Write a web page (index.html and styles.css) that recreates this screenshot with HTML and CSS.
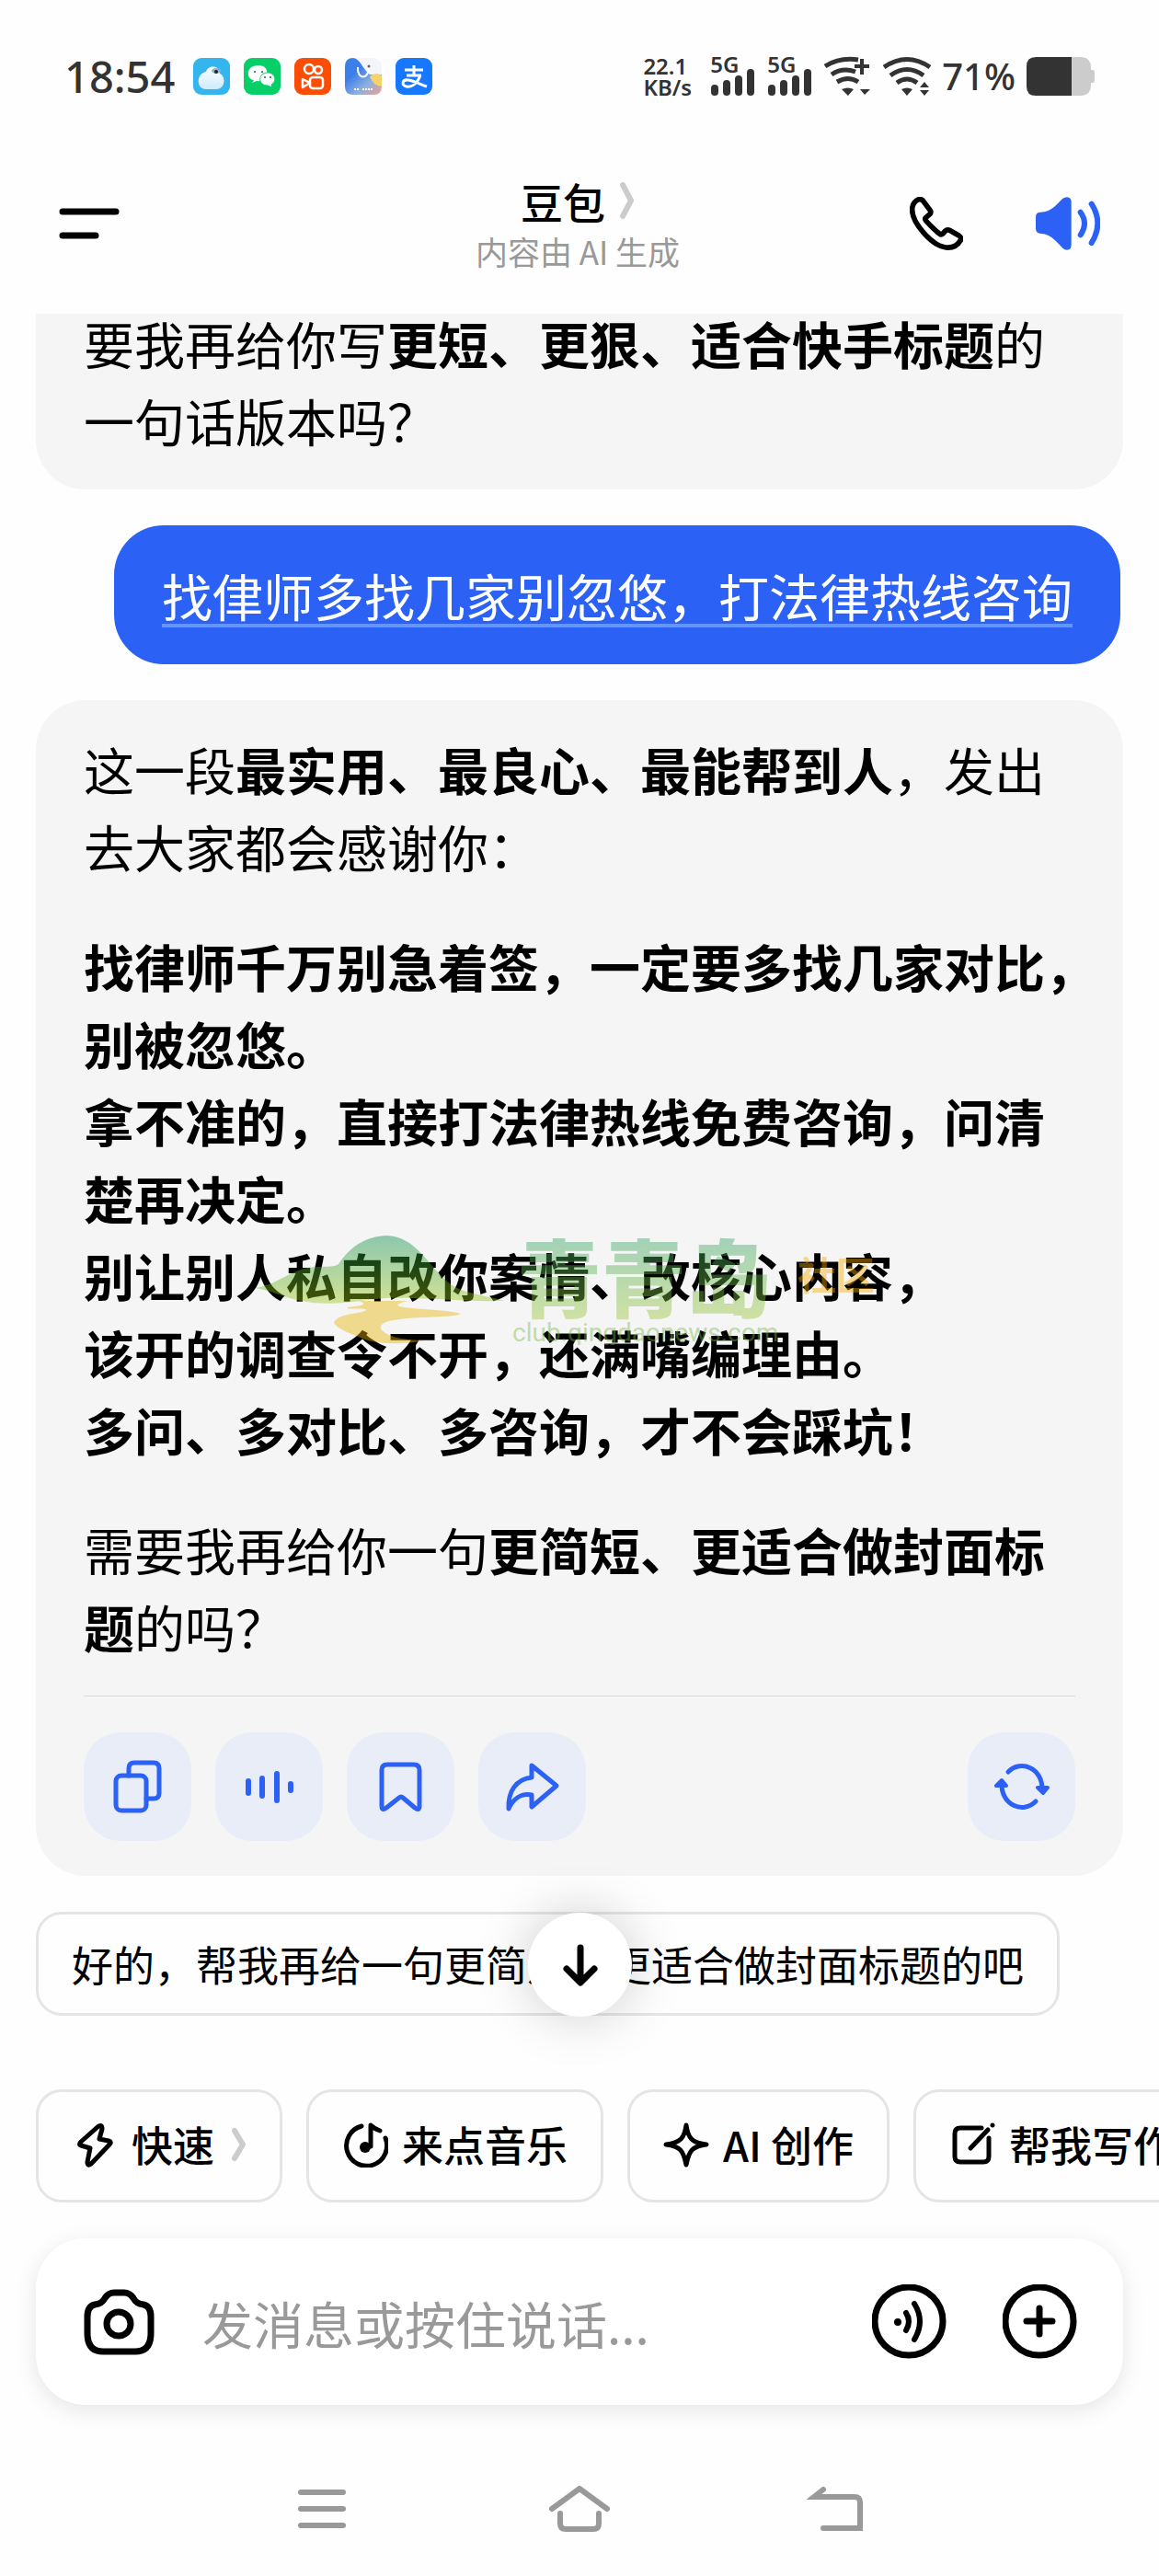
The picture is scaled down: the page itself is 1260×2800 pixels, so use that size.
FILE: index.html
```html
<!DOCTYPE html>
<html lang="zh-CN">
<head>
  <meta charset="UTF-8" />
  <meta name="viewport" content="width=device-width, initial-scale=1.0"/>
  <title>豆包</title>
  <link rel="stylesheet" href="styles.css">
</head>
<body>
  <div class="page">
    <div class="status-bar">
      <span class="clock">18:54</span>
      <div class="app-icons">
        <svg viewBox="0 0 40 40"><defs><linearGradient id="bird" x1="0" y1="0" x2="0" y2="1"><stop offset="0" stop-color="#fff"/><stop offset="1" stop-color="#cdeafc"/></linearGradient></defs><rect width="40" height="40" rx="9" fill="#35b5ee"/><path d="M14 15C16 8 28 7 29 17C36 20 35 34 25 34H14C3 34 3 17 14 15Z" fill="url(#bird)"/><ellipse cx="25" cy="14" rx="5" ry="3" fill="#8cb4c8"/><circle cx="25" cy="15" r="2" fill="#223"/></svg>
        <svg viewBox="0 0 40 40"><rect width="40" height="40" rx="9" fill="#05cf66"/><path d="M16 8C2 8 2 23 11 24L9 27L14 25C28 27 30 8 16 8Z" fill="#fff"/><path d="M26 16C15 16 15 30 26 30L31 32L30 29C37 25 34 16 26 16Z" fill="#fff" stroke="#05cf66"/><g fill="#056f3a"><circle cx="12" cy="15" r="1"/><circle cx="20" cy="15" r="1"/><circle cx="23" cy="21" r="1"/><circle cx="29" cy="21" r="1"/></g></svg>
        <svg viewBox="0 0 40 40"><rect width="40" height="40" rx="9" fill="#fb4d05"/><g fill="none" stroke="#fff" stroke-width="2.5" stroke-linejoin="round"><circle cx="16" cy="12" r="5"/><circle cx="26" cy="13" r="4"/><rect x="17" y="21" width="14" height="12" rx="3"/><path d="M17 27L9 23V32Z"/></g></svg>
        <svg viewBox="0 0 40 40"><defs><linearGradient id="jin" x1="0.4" y1="0.3" x2="1" y2="1"><stop offset="0" stop-color="#3d7fe8"/><stop offset="0.5" stop-color="#8fb0e0"/><stop offset="1" stop-color="#f3a08a"/></linearGradient></defs><rect width="40" height="40" rx="9" fill="#f3f5fa"/><path d="M0 9Q0 0 9 0C17 1 19 12 27 18H40V31Q40 40 31 40H9Q0 40 0 31Z" fill="url(#jin)"/><path d="M27 20Q36 14 40 20V31Q30 30 27 20Z" fill="#f5d36b"/><path d="M14 10C13 24 26 24 26 10" fill="none" stroke="#fff" stroke-width="2"/><circle cx="26" cy="9" r="1.5" fill="#567"/><path d="M10 34H16M19 34H30" stroke="#fff" stroke-width="2" stroke-dasharray="2 1"/></svg>
        <svg viewBox="0 0 40 40"><rect width="40" height="40" rx="9" fill="#1677ff"/><g fill="none" stroke="#fff" stroke-width="3"><path d="M10 13H30M20 8V18M12 19H28"/><path d="M27 19C23 29 17 32 12 31C6 30 7 23 14 24C21 25 27 29 34 31"/></g></svg>
      </div>
      <div class="status-right">
        <div class="net-speed">22.1<br>KB/s</div>
        <div class="signal">
          <span>5G</span>
          <svg viewBox="0 0 50 30"><path d="M5 22V26M18 17V26M31 12V26M44 5V26" /></svg>
        </div>
        <div class="signal">
          <span>5G</span>
          <svg viewBox="0 0 50 30"><path d="M5 22V26M18 17V26M31 12V26M44 5V26" /></svg>
        </div>
        <svg class="wifi" viewBox="0 0 52 44"><g fill="none" stroke="#333" stroke-width="5"><path d="M1 11Q17 1 37 4M8 20Q20 12 34 17M14 28Q26 21 37 28"/><path d="M41 3V20M33 11H49" stroke-width="4"/></g><path d="M19 36Q26 33 32 36L26 43ZM39 36H50L44 42Z" fill="#333"/></svg>
        <svg class="wifi" viewBox="0 0 52 44"><g fill="none" stroke="#333" stroke-width="5"><path d="M1 12Q26 -5 51 12M8 21Q26 8 44 21M15 29Q26 21 37 29"/></g><path d="M20 36Q26 33 32 36L26 43ZM40 34L45 28L50 34ZM40 37H50L45 43Z" fill="#333"/></svg>
        <span class="percent">71%</span>
        <svg class="battery" viewBox="0 0 74 42"><path d="M48 0H60Q70 1 70 11V14H72Q74 14 74 17V25Q74 28 72 28H70V31Q70 41 60 42H48Z" fill="#ccc"/><path d="M49 0H10Q0 0 0 10V32Q0 42 10 42H49Z" fill="#333"/></svg>
      </div>
    </div>

    <header class="header">
      <button class="icon-btn menu-btn" aria-label="菜单">
        <svg width="70" height="34" viewBox="0 0 70 34"><path d="M8 4H66M8 30H44" fill="none" stroke="#000" stroke-width="7" stroke-linecap="round"/></svg>
      </button>
      <div class="title">
        <h1>豆包 <svg width="16" height="40" viewBox="0 0 16 40"><path d="M3 3L12 20L3 37" /></svg></h1>
        <p>内容由 AI 生成</p>
      </div>
      <div class="header-actions">
        <button class="icon-btn" aria-label="通话">
          <svg width="58" height="58" viewBox="0 0 174 174"><path d="M22 12Q36 2 46 16L66 43Q71 50 66 56L53 67Q48 72 53 78Q74 102 97 120Q103 125 108 120L116 111Q122 105 130 109L160 126Q172 134 164 144Q150 168 118 165C70 158 8 84 8 42Q8 22 22 12Z" fill="none" stroke="#000" stroke-width="17" stroke-linejoin="round"/></svg>
        </button>
        <button class="icon-btn" aria-label="朗读">
          <svg width="70" height="58" viewBox="0 0 210 174"><path d="M0 65Q0 50 16 50C50 50 70 22 88 5Q100 -3 110 3Q116 7 116 15V158Q116 168 108 172Q98 176 88 167C70 150 50 120 18 120Q0 118 0 104Z" fill="#2b62f5"/><path d="M146 50Q172 86 146 124M182 23Q222 86 182 150" fill="none" stroke="#2b62f5" stroke-width="18" stroke-linecap="round"/></svg>
        </button>
      </div>
    </header>

    <main class="chat">
      <div class="card card-cut">
        <p>要我再给你写<b>更短、更狠、适合快手标题</b>的<br>一句话版本吗？</p>
      </div>

      <div class="bubble"><span>找侓师多找几家别忽悠，打法律热线咨询</span></div>

      <div class="card">
        <p>这一段<b>最实用、最良心、最能帮到人</b>，发出<br>去大家都会感谢你：</p>
        <p><b>找律师千万别急着签，一定要多找几家对比，<br>别被忽悠。<br>拿不准的，直接打法律热线免费咨询，问清<br>楚再决定。<br>别让别人私自改你案情、改核心内容，<br>该开的调查令不开，还满嘴编理由。<br>多问、多对比、多咨询，才不会踩坑！</b></p>
        <p>需要我再给你一句<b>更简短、更适合做封面标<br>题</b>的吗？</p>
        <div class="actions">
          <button aria-label="复制"><svg viewBox="0 0 60 60"><rect x="6" y="18" width="33" height="38" rx="6"/><path d="M20 18V10Q20 4 26 4H47Q53 4 53 10V37Q53 43 47 43H39"/></svg></button>
          <button aria-label="播放"><svg viewBox="0 0 60 60"><path d="M7 24V37M22 21V40M38 16V45M53 27V34" stroke-width="6"/></svg></button>
          <button aria-label="收藏"><svg viewBox="0 0 60 60"><path d="M9 51V12Q9 6 15 6H44Q50 6 50 12V51Q50 57 45 53L32 42Q30 40 28 42L14 53Q9 57 9 51Z"/></svg></button>
          <button aria-label="分享"><svg viewBox="0 0 60 60"><path d="M29 7L56 29L29 52V39C18 37 9 43 4 54C3 35 12 22 29 20Z"/></svg></button>
          <button class="refresh" aria-label="重新生成"><svg viewBox="0 0 60 60"><path d="M15 14C29 0 53 10 52 34M45 46C31 60 7 50 8 26"/><path d="M47 31H58L53 37ZM2 29H13L8 23Z" fill="#2b62f5" stroke-width="4"/></svg></button>
        </div>
      </div>

      <button class="suggestion">好的，帮我再给一句更简短、更适合做封面标题的吧</button>
      <button class="to-bottom" aria-label="回到底部">
        <svg width="44" height="48" viewBox="0 0 44 48"><path d="M22 5V42M7 28L22 43L37 28"/></svg>
      </button>
    </main>

    <div class="chips">
      <button><svg viewBox="0 0 50 50"><path d="M28 6Q33 2 33 8L30 19L40 21Q44 22 41 25L21 46Q17 49 17 44L20 29L10 26Q7 25 10 22Z"/></svg>快速<svg class="chevron" viewBox="0 0 20 40"><path d="M7 5L16 20L7 35"/></svg></button>
      <button><svg viewBox="0 0 50 50"><path d="M21 5A22 22 0 1 0 47 18M31 27V4Q35 8 41 10"/><circle cx="25" cy="28" r="6" fill="#000" stroke="none"/></svg>来点音乐</button>
      <button><svg viewBox="0 0 50 50"><path d="M25 4C27 18 31 23 47 25C31 27 28 32 25 47C22 32 19 27 3 25C19 23 23 18 25 4Z"/></svg>AI 创作</button>
      <button><svg viewBox="0 0 50 50"><path d="M35 7H12Q6 7 6 13V38Q6 44 12 44H37Q43 44 43 38V18M23 29L42 9M47 4V4"/></svg>帮我写作</button>
    </div>

    <div class="composer">
      <button class="icon-btn" aria-label="拍照">
        <svg width="77" height="72" viewBox="0 0 77 72"><g fill="none" stroke="#000" stroke-width="7"><path d="M12 17Q20 16 23 10Q27 4 33 4H44Q50 4 54 10Q57 16 65 17Q73 19 73 30V48Q73 68 56 68H21Q4 68 4 48V30Q4 19 12 17Z"/><circle cx="38" cy="38" r="13"/></g></svg>
      </button>
      <input type="text" placeholder="发消息或按住说话..." aria-label="发消息">
      <button class="icon-btn" aria-label="语音">
        <svg width="81" height="81" viewBox="0 0 81 81"><g fill="none" stroke="#000" stroke-width="6" stroke-linecap="round"><circle cx="40" cy="40" r="37" stroke-width="7"/><path d="M37 31Q43 40 37 50M46 21Q58 40 46 60"/></g><circle cx="28" cy="41" r="4"/></svg>
      </button>
      <button class="icon-btn" aria-label="更多">
        <svg width="81" height="81" viewBox="0 0 81 81"><g fill="none" stroke="#000" stroke-width="7" stroke-linecap="round"><circle cx="40" cy="40" r="37"/><path d="M40 26V54M26 40H54"/></g></svg>
      </button>
    </div>

    <nav class="nav-bar">
      <button class="icon-btn" aria-label="最近任务"><svg viewBox="0 0 66 50"><path d="M10 7H56M10 25H56M10 43H56"/></svg></button>
      <button class="icon-btn" aria-label="主屏幕"><svg viewBox="0 0 66 50"><path d="M3 25L33 3L63 25M12 30V41Q12 47 18 47H48Q54 47 54 41V30"/></svg></button>
      <button class="icon-btn" aria-label="返回"><svg viewBox="0 0 66 50"><path d="M18 4L8 12H52Q58 12 58 18V46H18"/></svg></button>
    </nav>

    <svg class="watermark" width="704" height="120" viewBox="0 0 704 120" aria-hidden="true">
      <defs>
        <linearGradient id="hill" x1="0" y1="0" x2="0" y2="1"><stop offset="0" stop-color="#008a4b"/><stop offset="1" stop-color="#a0c814"/></linearGradient>
        <linearGradient id="name" x1="0" y1="0" x2="0" y2="1"><stop offset="0.2" stop-color="#2fa264"/><stop offset="0.9" stop-color="#a0c832"/></linearGradient>
      </defs>
      <path d="M0 58C30 52 40 35 68 35C78 34 84 36 90 32C105 10 122 2 142 1C176 2 188 36 212 54C228 65 250 66 270 72C220 73 180 68 140 69C100 73 80 78 50 72C35 70 22 62 0 58Z" fill="url(#hill)"/>
      <path d="M112 72H165C150 76 150 78 170 80C200 82 220 84 223 86C215 91 175 88 150 93C130 96 132 105 150 111C160 114 175 115 185 115C150 121 125 118 112 111C90 103 80 96 88 92C96 85 115 86 120 82C122 79 95 82 100 79C118 77 122 76 112 72Z" fill="#e6b400"/>
      <text x="284" y="83" class="wm-name">青青岛</text>
      <text x="589" y="60" class="wm-tag">社区</text>
      <text x="279" y="116" class="wm-url">club.qingdaonews.com</text>
    </svg>
  </div>
</body>
</html>
```
FILE: styles.css
```css
* {
  box-sizing: border-box;
}

body {
  margin: 0;
  background: #fefefe;
  color: #000;
  font-family: "Noto Sans CJK SC", sans-serif;
}

button {
  margin: 0;
  padding: 0;
  border: none;
  background: none;
  color: #000;
  font-family: inherit;
  cursor: pointer;
}

svg {
  display: block;
  flex-shrink: 0;
}

.page {
  position: relative;
  display: flex;
  flex-direction: column;
  min-height: 100vh;
  overflow: hidden;
}

/* status bar */
.status-bar {
  display: flex;
  align-items: center;
  height: 50px;
  margin-top: 58px;
  padding: 0 70px;
  color: #333;
  font-family: "Noto Sans", sans-serif;
}

.clock {
  font-size: 47px;
  line-height: 50px;
  font-weight: 500;
}

.app-icons {
  display: flex;
  gap: 15px;
  margin-left: 20px;
}

.app-icons svg {
  width: 40px;
  height: 40px;
}

.status-right {
  display: flex;
  align-items: center;
  gap: 12px;
  margin-left: auto;
}

.net-speed {
  margin-right: 8px;
  font-size: 24px;
  line-height: 23px;
  font-weight: 600;
}

.signal {
  position: relative;
  width: 50px;
  height: 42px;
  display: flex;
  align-items: flex-end;
}

.signal span {
  position: absolute;
  left: 0;
  top: -4px;
  font-size: 24px;
  line-height: 24px;
  font-weight: 600;
}

.signal svg {
  width: 50px;
  height: 30px;
}

.signal path {
  fill: none;
  stroke: #333;
  stroke-width: 8;
  stroke-linecap: round;
}

.wifi {
  width: 52px;
  height: 44px;
}

.percent {
  font-size: 40px;
  line-height: 50px;
  font-weight: 500;
}

.battery {
  width: 74px;
  height: 42px;
}

/* header */
.header {
  display: grid;
  grid-template-columns: 1fr auto 1fr;
  align-items: center;
  height: 233px;
  padding: 36px 64px 0 60px;
}

.menu-btn {
  justify-self: start;
}

.title {
  text-align: center;
}

.title h1 {
  display: flex;
  align-items: center;
  justify-content: center;
  gap: 16px;
  margin: 0;
  font-size: 46px;
  line-height: 60px;
  font-weight: 500;
}

.title p {
  margin: 0;
  color: #999;
  font-size: 35px;
  line-height: 50px;
}

.title path,
.chips .chevron path {
  fill: none;
  stroke: #ccc;
  stroke-width: 6;
  stroke-linecap: round;
  stroke-linejoin: round;
}

.header-actions {
  display: flex;
  justify-content: flex-end;
  gap: 79px;
}

/* messages */
.chat {
  position: relative;
  flex: 1;
  display: flex;
  flex-direction: column;
  align-items: flex-start;
  gap: 39px;
  padding: 0 39px 79px;
}

.card {
  align-self: stretch;
  padding: 32px 52px 38px;
  border-radius: 54px;
  background: #f5f5f5;
  font-size: 55px;
  line-height: 84px;
}

.card p {
  margin: 0 0 46px;
  white-space: nowrap;
}

.card b {
  font-weight: 700;
}

/* this one is scrolled under the header */
.card-cut {
  overflow: hidden;
  padding-top: 0;
  padding-bottom: 34px;
  border-radius: 0 0 54px 54px;
}

.card-cut p {
  margin: -11px 0 0;
}

.bubble {
  align-self: flex-end;
  margin-right: 3px;
  padding: 33px 52px 34px;
  border-radius: 54px;
  background: #2b62f5;
  color: #fff;
  font-size: 55px;
  line-height: 84px;
}

.bubble span {
  text-decoration: underline;
  text-decoration-color: #6395fa;
  text-decoration-thickness: 4px;
  text-decoration-skip-ink: none;
  text-underline-offset: 8px;
}

.actions {
  display: flex;
  gap: 26px;
  margin-top: -12px;
  padding-top: 39px;
  border-top: 1px solid #d8d8d8;
}

.actions button {
  display: flex;
  align-items: center;
  justify-content: center;
  width: 117px;
  height: 118px;
  border-radius: 40px;
  background: #e8edf7;
}

.actions .refresh {
  margin-left: auto;
}

.actions svg {
  width: 60px;
  height: 60px;
  fill: none;
  stroke: #2b62f5;
  stroke-width: 5;
  stroke-linecap: round;
  stroke-linejoin: round;
}

.suggestion {
  padding: 0 36px;
  border: 3px solid #e5e5e5;
  border-radius: 28px;
  background: #fefefe;
  font-size: 45px;
  line-height: 107px;
  white-space: nowrap;
}

.to-bottom {
  position: absolute;
  left: 50%;
  bottom: 79px;
  display: flex;
  align-items: center;
  justify-content: center;
  width: 113px;
  height: 113px;
  margin-left: -56px;
  border-radius: 50%;
  background: #fff;
  box-shadow: 0 0 60px rgba(0, 0, 0, 0.2);
}

.to-bottom path {
  fill: none;
  stroke: #000;
  stroke-width: 7;
  stroke-linecap: round;
  stroke-linejoin: round;
}

/* quick actions */
.chips {
  display: flex;
  gap: 26px;
  padding: 0 39px;
  overflow: hidden;
}

.chips button {
  display: flex;
  flex-shrink: 0;
  align-items: center;
  gap: 15px;
  padding: 0 36px 3px;
  border: 3px solid #e5e5e5;
  border-radius: 28px;
  background: #fefefe;
  font-size: 45px;
  line-height: 114px;
  font-weight: 500;
  white-space: nowrap;
}

.chips svg {
  width: 50px;
  height: 50px;
  fill: none;
  stroke: #000;
  stroke-width: 5;
  stroke-linecap: round;
  stroke-linejoin: round;
}

.chips .chevron {
  width: 20px;
  height: 40px;
}

/* input */
.composer {
  display: flex;
  align-items: center;
  height: 181px;
  margin: 39px 39px 0;
  padding: 0 50px 0 52px;
  border-radius: 54px;
  background: #fff;
  box-shadow: 0 6px 24px rgba(0, 0, 0, 0.1);
}

.composer input {
  flex: 1;
  min-width: 0;
  margin-left: 52px;
  padding: 0;
  border: none;
  outline: none;
  background: none;
  font-family: inherit;
  font-size: 55px;
  line-height: 84px;
}

.composer input::placeholder {
  color: #999;
}

.composer input ~ button + button {
  margin-left: 61px;
}

.nav-bar {
  display: flex;
  justify-content: center;
  gap: 214px;
  padding: 88px 0 48px;
}

.nav-bar svg {
  width: 66px;
  height: 50px;
  fill: none;
  stroke: #999;
  stroke-width: 6;
  stroke-linecap: round;
}

/* watermark */
.watermark {
  position: absolute;
  left: 50%;
  top: 50%;
  margin: -58px 0 0 -352px;
  opacity: 0.42;
  pointer-events: none;
}

.wm-name {
  fill: url(#name);
  font-size: 92px;
  font-weight: 900;
}

.wm-tag {
  fill: #f5a800;
  font-size: 42px;
  font-weight: 700;
}

.wm-url {
  fill: #7ab648;
  font-family: Roboto, sans-serif;
  font-size: 28px;
}
```
